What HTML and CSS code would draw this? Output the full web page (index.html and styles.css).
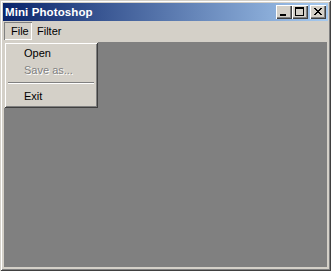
FILE: index.html
```html
<!DOCTYPE html>
<html>
<head>
<meta charset="utf-8">
<link rel="stylesheet" href="styles.css">
</head>
<body>
<div class="window">
  <div class="titlebar">
    <span class="title">Mini Photoshop</span>
    <div class="buttons">
      <div class="btn min"><span class="min-glyph"></span></div>
      <div class="btn max"><span class="max-glyph"></span></div>
      <div class="btn close">
        <svg width="8" height="7" viewBox="0 0 8 7"><path d="M0 0h2v1h-2zM6 0h2v1h-2zM1 1h2v1h-2zM5 1h2v1h-2zM2 2h4v1h-4zM3 3h2v1h-2zM2 4h4v1h-4zM1 5h2v1h-2zM5 5h2v1h-2zM0 6h2v1h-2zM6 6h2v1h-2z" fill="#000"/></svg>
      </div>
    </div>
  </div>
  <div class="menubar">
    <span class="menu-item active">File</span>
    <span class="menu-item">Filter</span>
  </div>
  <div class="client">
    <div class="dropdown">
      <div class="dd-item">Open</div>
      <div class="dd-item disabled">Save as...</div>
      <div class="dd-sep"></div>
      <div class="dd-item">Exit</div>
    </div>
  </div>
</div>
</body>
</html>
```
FILE: styles.css
```css
* { box-sizing: border-box; }
html, body {
  margin: 0;
  padding: 0;
  background: #d4d0c8;
}
body {
  font-family: "Liberation Sans", Arial, sans-serif;
  font-size: 11px;
  color: #000;
}
.window {
  width: 331px;
  height: 271px;
  background: #d4d0c8;
  padding: 3px 3px 4px 3px;
  box-shadow: inset 1px 1px 0 #d4d0c8, inset -1px -1px 0 #404040,
              inset 2px 2px 0 #ffffff, inset -2px -2px 0 #808080;
  display: flex;
  flex-direction: column;
}
.titlebar {
  height: 18px;
  flex: none;
  background: linear-gradient(to right, #0a246a, #a6caf0);
  display: flex;
  align-items: center;
  justify-content: space-between;
  padding: 0 2px 0 2px;
}
.title {
  color: #fff;
  font-weight: bold;
  font-size: 11.5px;
  padding-left: 0;
  letter-spacing: 0.1px;
}
.buttons {
  display: flex;
  align-items: center;
}
.btn {
  width: 16px;
  height: 14px;
  background: #d4d0c8;
  box-shadow: inset 1px 1px 0 #ffffff, inset -1px -1px 0 #404040,
              inset -2px -2px 0 #808080;
  position: relative;
  display: flex;
  justify-content: center;
  align-items: center;
}
.btn.close { margin-left: 2px; }
.min-glyph {
  position: absolute;
  left: 4px;
  top: 9px;
  width: 6px;
  height: 2px;
  background: #000;
}
.max-glyph {
  position: absolute;
  left: 3px;
  top: 2px;
  width: 9px;
  height: 9px;
  border: 1px solid #000;
  border-top-width: 2px;
}
.btn.close svg {
  position: absolute;
  left: 4px;
  top: 3px;
}
.menubar {
  height: 20px;
  flex: none;
  display: flex;
  align-items: center;
  padding-left: 1px;
}
.menu-item {
  height: 18px;
  line-height: 18px;
  padding: 0 6px;
}
.menu-item.active {
  box-shadow: inset 1px 1px 0 #808080, inset -1px -1px 0 #ffffff;
  width: 28px;
  padding: 0 0 0 7px;
}
.menu-item + .menu-item {
  padding-left: 5px;
}
.client {
  flex: 1;
  background: #808080;
  margin: 1px 1px 0 1px;
  position: relative;
}
.dropdown {
  position: absolute;
  left: 0;
  top: 0;
  width: 94px;
  background: #d4d0c8;
  padding: 3px;
  box-shadow: inset 1px 1px 0 #d4d0c8, inset -1px -1px 0 #404040,
              inset 2px 2px 0 #ffffff, inset -2px -2px 0 #808080;
}
.dd-item {
  height: 17px;
  line-height: 17px;
  padding-left: 17px;
}
.dd-item.disabled {
  color: #808080;
  text-shadow: 1px 1px 0 #ffffff;
}
.dd-sep {
  height: 9px;
  position: relative;
}
.dd-sep::before {
  content: "";
  position: absolute;
  left: 1px;
  right: 1px;
  top: 3px;
  height: 1px;
  background: #808080;
  box-shadow: 0 1px 0 #ffffff;
}
```
